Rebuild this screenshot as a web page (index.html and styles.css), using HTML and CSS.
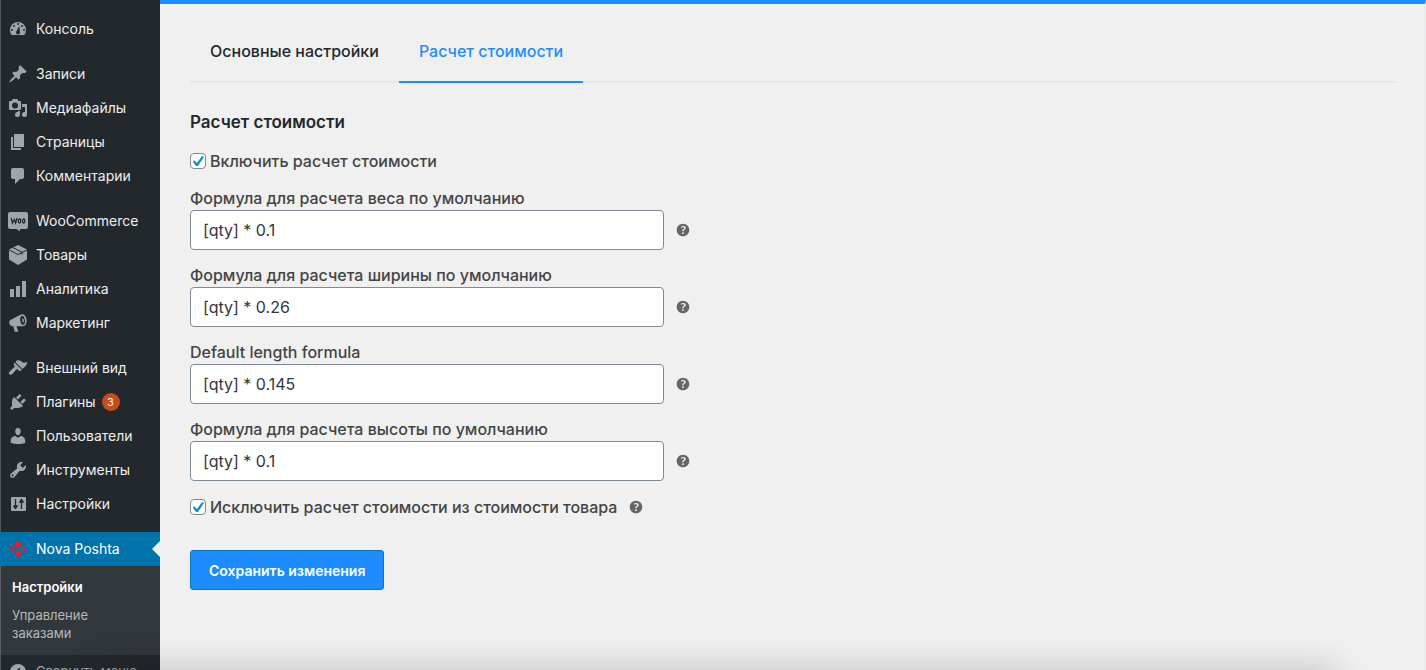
FILE: index.html
```html
<!DOCTYPE html>
<html lang="ru">
<head>
<meta charset="utf-8">
<meta name="viewport" content="width=device-width, initial-scale=1">
<title>Nova Poshta — Расчет стоимости</title>
<link rel="stylesheet" href="styles.css">
</head>
<body>
<div class="layout">
  <nav class="sidebar" aria-label="Главное меню">
    <ul class="menu">
      <li><a class="menu-link" href="#"><svg class="icon" viewBox="0 0 20 20"><path fill-rule="evenodd" d="M3.760 16h12.480A7.900 7.900 0 0 0 18 11a8 8 0 1 0-16 0c0 1.890.66 3.630 1.760 5zM10 4a1 1 0 1 1 0 2 1 1 0 0 1 0-2zM6 6a1 1 0 1 1 0 2 1 1 0 0 1 0-2zm8 0a1 1 0 1 1 0 2 1 1 0 0 1 0-2zM4 10a1 1 0 1 1 0 2 1 1 0 0 1 0-2zm12 0a1 1 0 1 1 0 2 1 1 0 0 1 0-2zm-4.600-3.200L12 13.500a2 2 0 1 1-3.600-1.200z"/></svg><span class="menu-text">Консоль</span></a></li>
      <li class="group"><a class="menu-link" href="#"><svg class="icon" viewBox="0 0 20 20"><path d="M10.440 3.020l1.820-1.820 6.360 6.350-1.830 1.820c-1.050-.68-2.480-.57-3.410.36l-.75.75c-.92.93-1.040 2.350-.35 3.410l-1.830 1.820-2.410-2.410-2.800 2.790c-.42.42-3.380 2.710-3.800 2.290s1.860-3.390 2.280-3.810l2.790-2.790L4.100 9.360l1.830-1.820c1.050.69 2.480.57 3.400-.36l.75-.75c.93-.92 1.050-2.350.36-3.410z"/></svg><span class="menu-text">Записи</span></a></li>
      <li><a class="menu-link" href="#"><svg class="icon" viewBox="0 0 20 20"><path fill-rule="evenodd" d="M13 11V4c0-.55-.45-1-1-1h-1.670L9.330 1H4.670l-1 2H2c-.55 0-1 .45-1 1v7c0 .55.45 1 1 1h10c.55 0 1-.45 1-1zM7 4.500a3 3 0 1 1 0 6 3 3 0 0 1 0-6zM14 6h5v10.500a2.500 2.500 0 1 1-2-2.450V9h-3zm-4 8.050V13h2v3.500a2.500 2.500 0 1 1-2-2.450z"/></svg><span class="menu-text">Медиафайлы</span></a></li>
      <li><a class="menu-link" href="#"><svg class="icon" viewBox="0 0 20 20"><path d="M6 15V2h10v13zM5 16h8v2H3V5h2z"/></svg><span class="menu-text">Страницы</span></a></li>
      <li><a class="menu-link" href="#"><svg class="icon" viewBox="0 0 20 20"><path d="M5 2h9c1.100 0 2 .9 2 2v7c0 1.100-.9 2-2 2h-2l-5 5v-5H5c-1.100 0-2-.9-2-2V4c0-1.100.9-2 2-2z"/></svg><span class="menu-text">Комментарии</span></a></li>

      <li class="group"><a class="menu-link" href="#"><svg class="icon" viewBox="0 0 20 20"><path d="M2 1h16a2 2 0 0 1 2 2v13a2 2 0 0 1-2 2h-6l0 2.500-3.500-2.500H2a2 2 0 0 1-2-2V3a2 2 0 0 1 2-2z"/><path class="icon-line" d="M3.200 7l1.200 5L6.300 8.500l1.300 3.500L9.200 7M11.500 8c1.500-.4 1.600 3.700.1 4-1.700.3-1.500-3.700-.1-4zM15.600 8c1.500-.4 1.600 3.700.1 4-1.700.3-1.500-3.700-.1-4z"/></svg><span class="menu-text">WooCommerce</span></a></li>
      <li><a class="menu-link" href="#"><svg class="icon" viewBox="0 0 20 20"><path d="M10 0l9 4.500v10L10 20l-9-5.500v-10z"/><path class="icon-line thin" d="M1 5l9 4.500L19 5M5 2.700l9 4.500v2.500"/></svg><span class="menu-text">Товары</span></a></li>
      <li><a class="menu-link" href="#"><svg class="icon" viewBox="0 0 20 20"><path d="M14 2h4v16h-4zM8 7h4v11H8zM2 10h4v8H2z"/></svg><span class="menu-text">Аналитика</span></a></li>
      <li><a class="menu-link" href="#"><svg class="icon" viewBox="0 0 20 20"><path fill-rule="evenodd" d="M13.500 1.300c2.200-.7 4.500 1.500 5 4.900.5 3.600-.9 6.800-3.300 7H8.500l1.800 5.600H6.700L5.400 13.200C3.200 13.500 1.500 12 1.300 10c-.2-1.700.4-2.800 1.500-3.300zm.3 1.600c-1.500.5-2 2.600-1.500 5.200.5 2.500 1.700 4.100 3.200 3.600 1.400-.5 1.900-2.700 1.300-5-.5-2.500-1.700-4.200-3-3.800zM14 5.300c1.100-.2 1.900 1 2 2.200.1 1.200-.4 2-1.200 2.100z"/></svg><span class="menu-text">Маркетинг</span></a></li>

      <li class="group"><a class="menu-link" href="#"><svg class="icon" viewBox="0 0 20 20"><path d="M14.480 11.060L7.410 3.990l1.500-1.500c.5-.56 2.300-.42 3.530.35 1.240.78 1.800 1.820 3.430 1.880 1.420.06 2.820-.68 3.200-.17.4.6-.14 1.500-1.040 2.900zM6.700 4.700l7.070 7.070-1.060 1.060c-.39.39-1.020.39-1.410 0l-1.410-1.410c-.4-.39-1.020-.39-1.410 0-1.300 1.300-2.900 3.300-4.180 4.600-.9.9-2.200 1-2.900.3s-.6-2 .3-2.900c1.300-1.280 3.300-2.900 4.600-4.180.39-.39.39-1.020 0-1.410L5.640 5.760z"/></svg><span class="menu-text">Внешний вид</span></a></li>
      <li><a class="menu-link" href="#"><svg class="icon" viewBox="0 0 20 20"><path d="M13.110 4.360L9.870 7.600 8 5.730l3.240-3.240c.35-.34 1.050-.2 1.560.32.52.51.66 1.210.31 1.550zm-8 1.770l.91-1.120 9.010 9.010-1.190.84c-.71.71-2.630 1.160-3.820 1.160H6.140L4.900 17.260c-.59.59-1.540.59-2.120 0-.59-.58-.59-1.530 0-2.120l1.240-1.240v-3.880c0-1.130.4-3.190 1.090-3.890zm7.260 3.970l3.240-3.240c.34-.35 1.040-.21 1.550.31.52.51.66 1.210.31 1.550l-3.240 3.250z"/></svg><span class="menu-text">Плагины</span><span class="count">3</span></a></li>
      <li><a class="menu-link" href="#"><svg class="icon" viewBox="0 0 20 20"><path d="M10 9.250c-2.270 0-2.730-3.440-2.730-3.440C7 4.020 7.820 2 9.970 2c2.160 0 2.980 2.020 2.710 3.810 0 0-.41 3.440-2.680 3.440zm0 2.570L12.720 10c2.390 0 4.520 2.330 4.520 4.530v2.490s-3.650 1.130-7.240 1.130c-3.650 0-7.240-1.130-7.240-1.130v-2.490c0-2.250 1.940-4.480 4.470-4.480z"/></svg><span class="menu-text">Пользователи</span></a></li>
      <li><a class="menu-link" href="#"><svg class="icon" viewBox="0 0 20 20"><path d="M16.680 9.770c-1.340 1.340-3.300 1.670-4.950.99l-5.410 6.520c-.99.99-2.590.99-3.580 0s-.99-2.590 0-3.570l6.520-5.420c-.68-1.650-.35-3.610.99-4.950 1.280-1.280 3.120-1.620 4.720-1.060l-2.890 2.890 2.820 2.820 2.860-2.870c.53 1.580.18 3.390-1.080 4.650zM3.810 16.210c.4.39 1.040.39 1.430 0 .4-.4.4-1.040 0-1.430-.39-.4-1.030-.4-1.430 0-.39.39-.39 1.030 0 1.430z"/></svg><span class="menu-text">Инструменты</span></a></li>
      <li><a class="menu-link" href="#"><svg class="icon" viewBox="0 0 20 20"><path d="M4 3h13a1 1 0 0 1 1 1v12a1 1 0 0 1-1 1H4a1 1 0 0 1-1-1V4a1 1 0 0 1 1-1z"/><path class="icon-line" d="M7.500 5v9.500M5.500 12h4M7.500 14.500L6 12.500h3zM13.500 15V5.500M11.500 8h4M13.500 5.500L12 7.500h3z"/></svg><span class="menu-text">Настройки</span></a></li>

      <li class="group current">
        <a class="menu-link" href="#" aria-current="true"><svg class="icon brand" viewBox="0 0 20 20"><path d="M10 1.500l4.500 4.500H12v2.500H8V6H5.500zM10 18.500l4.500-4.500H12v-2.500H8V14H5.500zM5.500 6v8l-4-4zM14.500 6v8l4-4z"/></svg><span class="menu-text">Nova Poshta</span></a>
        <ul class="submenu">
          <li><a class="submenu-link active" href="#">Настройки</a></li>
          <li><a class="submenu-link" href="#">Управление заказами</a></li>
        </ul>
      </li>
    </ul>
    <button class="menu-link collapse" type="button"><svg class="icon" viewBox="0 0 20 20"><path fill-rule="evenodd" d="M10 2a8 8 0 1 1 0 16 8 8 0 0 1 0-16zm2 3.500L6 10l6 4.500z"/></svg><span class="menu-text">Свернуть меню</span></button>
  </nav>

  <main class="content">
    <div class="tabs">
      <a class="tab" href="#">Основные настройки</a>
      <a class="tab active" href="#" aria-current="page">Расчет стоимости</a>
    </div>

    <form class="form">
      <h1 class="title">Расчет стоимости</h1>

      <div class="check-row">
        <input class="check" type="checkbox" id="enable" checked>
        <label for="enable">Включить расчет стоимости</label>
      </div>

      <div class="field">
        <label for="weight">Формула для расчета веса по умолчанию</label>
        <div class="control"><input class="text" type="text" id="weight" value="[qty] * 0.1"><svg class="help" viewBox="0 0 20 20"><use href="#help"/></svg></div>
      </div>
      <div class="field">
        <label for="width">Формула для расчета ширины по умолчанию</label>
        <div class="control"><input class="text" type="text" id="width" value="[qty] * 0.26"><svg class="help" viewBox="0 0 20 20"><use href="#help"/></svg></div>
      </div>
      <div class="field">
        <label for="length">Default length formula</label>
        <div class="control"><input class="text" type="text" id="length" value="[qty] * 0.145"><svg class="help" viewBox="0 0 20 20"><use href="#help"/></svg></div>
      </div>
      <div class="field">
        <label for="height">Формула для расчета высоты по умолчанию</label>
        <div class="control"><input class="text" type="text" id="height" value="[qty] * 0.1"><svg class="help" viewBox="0 0 20 20"><use href="#help"/></svg></div>
      </div>

      <div class="check-row">
        <input class="check" type="checkbox" id="exclude" checked>
        <label for="exclude">Исключить расчет стоимости из стоимости товара</label>
        <svg class="help" viewBox="0 0 20 20"><use href="#help"/></svg>
      </div>

      <button class="save" type="submit">Сохранить изменения</button>
    </form>
  </main>
</div>
<div class="bottom-shade"></div>
<svg class="defs" aria-hidden="true"><symbol id="help" viewBox="0 0 20 20"><path d="M17 10c0-3.870-3.140-7-7-7-3.870 0-7 3.130-7 7s3.130 7 7 7c3.860 0 7-3.130 7-7zm-6.300 1.480H9.140v-.43c0-.38.08-.7.24-.98s.46-.57.88-.89c.41-.29.68-.53.81-.71.14-.18.2-.39.2-.62 0-.25-.09-.44-.28-.58-.19-.13-.45-.19-.79-.19-.58 0-1.250.15-2 .46l-.64-1.280c.87-.49 1.800-.74 2.770-.74.81 0 1.450.2 1.920.58.48.39.71.91.71 1.550 0 .43-.09.8-.29 1.110-.19.32-.57.67-1.110 1.060-.38.28-.61.49-.71.63-.1.15-.15.34-.15.57v.46zm-1.470 2.740c-.18-.17-.27-.42-.27-.73 0-.33.08-.58.26-.75s.43-.25.77-.25c.32 0 .57.09.75.26s.27.42.27.74c0 .3-.09.55-.27.72-.18.18-.43.27-.75.27-.33 0-.58-.09-.76-.26z"/></symbol></svg>
</body>
</html>
```
FILE: styles.css
```css
* {
  box-sizing: border-box;
}

body {
  margin: 0;
  height: 100vh;
  overflow: hidden;
  background: #f0f0f0;
  color: #444;
  font-family: Inter, "Liberation Sans", sans-serif;
  font-size: 16px;
}

ul {
  margin: 0;
  padding: 0;
  list-style: none;
}

a {
  text-decoration: none;
}

.layout {
  display: flex;
  min-height: 100vh;
}

/* Sidebar */
.sidebar {
  flex: 0 0 160px;
  padding-top: 12px;
  background: #23282d;
  box-shadow: inset 1px 0 #50555a;
}

.menu-link {
  display: flex;
  align-items: center;
  gap: 8px;
  height: 34px;
  padding: 0 8px;
  color: #eee;
  font-size: 14px;
  white-space: nowrap;
}

.menu-text {
  line-height: 18px;
}

.group {
  margin-top: 11px;
}

.icon {
  flex: none;
  width: 20px;
  height: 20px;
  fill: #a0a5aa;
}

.icon-line {
  fill: none;
  stroke: #23282d;
  stroke-width: 1.3;
}

.thin {
  stroke-width: 1;
}

.brand {
  fill: #ee1c25;
}

.count {
  width: 18px;
  height: 18px;
  margin-left: -2px;
  border-radius: 50%;
  background: #ca4a1f;
  color: #fff;
  font-size: 11px;
  line-height: 18px;
  text-align: center;
}

.current .menu-link {
  position: relative;
  background: #0073aa;
  color: #fff;
}

.current .menu-link::after {
  content: "";
  position: absolute;
  top: 9px;
  right: 0;
  border: 8px solid transparent;
  border-left: 0;
  border-right-color: #f0f0f0;
}

.submenu {
  padding: 7px 12px 8px;
  background: #32373c;
  box-shadow: inset 1px 0 #5b6064;
}

.submenu-link {
  display: block;
  padding: 5px 0;
  color: #b4b9be;
  font-size: 13px;
  line-height: 18px;
}

.submenu-link.active {
  color: #fff;
  font-weight: 600;
}

.collapse {
  width: 100%;
  border: 0;
  background: none;
  color: #a0a5aa;
  font-family: inherit;
  font-size: 13px;
}

.collapse .menu-text {
  padding-bottom: 2px;
}

/* Content */
.content {
  flex: 1;
  padding: 0 30px;
  border-top: 4px solid #1e8cff;
  border-right: 1px solid #e6e6e6;
}

.tabs {
  display: flex;
  box-shadow: inset 0 -2px #e6e6e6;
}

.tab {
  padding: 35px 20px 18px;
  border-bottom: 2px solid transparent;
  color: #23282d;
  font-weight: 500;
  line-height: 24px;
}

.tab.active {
  border-color: #1e8cff;
  color: #1e8cff;
}

.form {
  padding-top: 27px;
  font-weight: 500;
}

.title {
  margin: 0 0 14px;
  color: #23282d;
  font-size: 17px;
  font-weight: 600;
  line-height: 24px;
}

.check-row {
  display: flex;
  align-items: center;
  gap: 4px;
  padding-top: 1px;
  line-height: 24px;
}

.check {
  appearance: none;
  width: 16px;
  height: 16px;
  margin: 0;
  border: 1px solid #7e8993;
  border-radius: 4px;
  background: #fff;
}

.check:checked::before {
  content: "";
  display: block;
  height: 14px;
  background: #1e8cbe;
  clip-path: polygon(11px 2px, 13px 3px, 7px 12px, 5px 12px, 2px 8px, 3px 6px, 6px 9px);
}

.field {
  margin: 13px 0;
}

.field label {
  display: block;
  line-height: 24px;
}

.control {
  display: flex;
  align-items: center;
  gap: 10px;
}

.text {
  width: 474px;
  height: 40px;
  padding: 0 12px;
  border: 1px solid #7e8993;
  border-radius: 4px;
  background: #fff;
  color: #32373c;
  font-family: inherit;
  font-size: 16px;
}

.help {
  width: 18px;
  height: 18px;
  fill: #666;
}

.check-row .help {
  margin-left: 6px;
}

.save {
  height: 40px;
  margin-top: 31px;
  padding: 0 18px;
  border: 1px solid #007cba;
  border-radius: 3px;
  background: #1e8cff;
  color: #fff;
  font-family: inherit;
  font-size: 14px;
  font-weight: 600;
}

/* Soft shade rising from the lower window edge */
.bottom-shade {
  position: fixed;
  right: 90px;
  bottom: -60px;
  left: 100px;
  height: 60px;
  box-shadow: 0 0 36px rgba(0, 0, 0, 0.22);
  pointer-events: none;
}

.defs {
  display: none;
}
```
